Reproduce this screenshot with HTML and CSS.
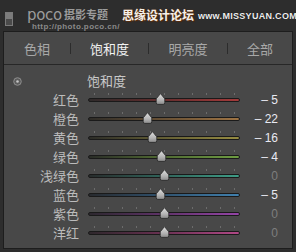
FILE: index.html
```html
<!DOCTYPE html>
<html lang="zh-CN">
<head>
    <meta charset="UTF-8">
    <title>HSL - 饱和度</title>
    <link rel="stylesheet" href="styles.css">
</head>
<body>
    <svg class="defs" width="0" height="0">
        <defs>
            <linearGradient id="knobFill" x1="0" y1="0" x2="0" y2="1">
                <stop offset="0" stop-color="#e0e0e0"/>
                <stop offset="0.6" stop-color="#b4b4b4"/>
                <stop offset="1" stop-color="#8a8a8a"/>
            </linearGradient>
            <symbol id="knob" viewBox="0 0 11 12">
                <path d="M5.5 0.6 L9.8 5.8 V9.6 Q9.8 11.4 8.2 11.4 H2.8 Q1.2 11.4 1.2 9.6 V5.8 Z" fill="url(#knobFill)" stroke="#2a2a2a" stroke-width="0.9"/>
            </symbol>
        </defs>
    </svg>

    <div class="header">
        <span class="toggle"></span>
        <div class="logo">
            <div class="logo-top"><span class="poco">poco</span><span class="zt">摄影专题</span></div>
            <div class="url">http://photo.poco.cn/</div>
        </div>
        <div class="watermark">
            <span class="wm-cn">思缘设计论坛</span>
            <span class="wm-en">www.MISSYUAN.COM</span>
        </div>
    </div>

    <div class="panel">
        <div class="tabs">
            <div class="tab">色相</div>
            <span class="sep"></span>
            <div class="tab active">饱和度</div>
            <span class="sep"></span>
            <div class="tab">明亮度</div>
            <span class="sep"></span>
            <div class="tab">全部</div>
        </div>

        <div class="section">
            <div class="row">
                <div class="cell-icon">
                    <svg width="9" height="9" viewBox="0 0 9 9">
                        <circle cx="4.5" cy="4.5" r="3.8" fill="#5c5c5c" stroke="#8e8e8e" stroke-width="1"/>
                        <circle cx="4.5" cy="4.5" r="1.3" fill="#c4c4c4"/>
                    </svg>
                </div>
                <div class="title">饱和度</div>
            </div>

            <div class="row">
                <div class="label">红色</div>
                <div class="slider">
                    <div class="ticks"><i></i><i></i><i></i><i></i><i></i><i></i><i></i><i></i><i></i><i></i><i></i></div>
                    <div class="track red"></div>
                    <svg class="thumb" style="left: 47.5%"><use href="#knob"/></svg>
                </div>
                <div class="value">– 5</div>
            </div>
            <div class="row">
                <div class="label">橙色</div>
                <div class="slider">
                    <div class="ticks"><i></i><i></i><i></i><i></i><i></i><i></i><i></i><i></i><i></i><i></i><i></i></div>
                    <div class="track orange"></div>
                    <svg class="thumb" style="left: 39%"><use href="#knob"/></svg>
                </div>
                <div class="value">– 22</div>
            </div>
            <div class="row">
                <div class="label">黄色</div>
                <div class="slider">
                    <div class="ticks"><i></i><i></i><i></i><i></i><i></i><i></i><i></i><i></i><i></i><i></i><i></i></div>
                    <div class="track yellow"></div>
                    <svg class="thumb" style="left: 42%"><use href="#knob"/></svg>
                </div>
                <div class="value">– 16</div>
            </div>
            <div class="row">
                <div class="label">绿色</div>
                <div class="slider">
                    <div class="ticks"><i></i><i></i><i></i><i></i><i></i><i></i><i></i><i></i><i></i><i></i><i></i></div>
                    <div class="track green"></div>
                    <svg class="thumb" style="left: 48%"><use href="#knob"/></svg>
                </div>
                <div class="value">– 4</div>
            </div>
            <div class="row">
                <div class="label">浅绿色</div>
                <div class="slider">
                    <div class="ticks"><i></i><i></i><i></i><i></i><i></i><i></i><i></i><i></i><i></i><i></i><i></i></div>
                    <div class="track aqua"></div>
                    <svg class="thumb" style="left: 50%"><use href="#knob"/></svg>
                </div>
                <div class="value zero">0</div>
            </div>
            <div class="row">
                <div class="label">蓝色</div>
                <div class="slider">
                    <div class="ticks"><i></i><i></i><i></i><i></i><i></i><i></i><i></i><i></i><i></i><i></i><i></i></div>
                    <div class="track blue"></div>
                    <svg class="thumb" style="left: 47.5%"><use href="#knob"/></svg>
                </div>
                <div class="value">– 5</div>
            </div>
            <div class="row">
                <div class="label">紫色</div>
                <div class="slider">
                    <div class="ticks"><i></i><i></i><i></i><i></i><i></i><i></i><i></i><i></i><i></i><i></i><i></i></div>
                    <div class="track purple"></div>
                    <svg class="thumb" style="left: 50%"><use href="#knob"/></svg>
                </div>
                <div class="value zero">0</div>
            </div>
            <div class="row">
                <div class="label">洋红</div>
                <div class="slider">
                    <div class="ticks"><i></i><i></i><i></i><i></i><i></i><i></i><i></i><i></i><i></i><i></i><i></i></div>
                    <div class="track magenta"></div>
                    <svg class="thumb" style="left: 50%"><use href="#knob"/></svg>
                </div>
                <div class="value zero">0</div>
            </div>
        </div>
    </div>
</body>
</html>
```

FILE: styles.css
```css
body {
    margin: 0;
    width: 296px;
    height: 252px;
    overflow: hidden;
    background-color: #2d2d2d;
    font-family: "Liberation Sans", "Noto Sans CJK SC", sans-serif;
    color: #c4c4c4;
}

.defs {
    position: absolute;
}

/* header strip */
.header {
    position: relative;
    height: 31px;
    display: flex;
    align-items: flex-start;
}

.toggle {
    margin-left: 5px;
    margin-top: 12px;
    width: 6px;
    height: 12px;
    border: 1px solid #7a7a7a;
    background: linear-gradient(#7c7c7c 50%, #4a4a4a 50%);
}

.logo {
    margin-left: 14px;
    margin-top: 8px;
    display: flex;
    flex-direction: column;
    color: #9c9c9c;
    font-weight: bold;
}

.logo-top {
    display: flex;
    align-items: flex-end;
    height: 13px;
}

.poco {
    font-family: "DejaVu Sans", sans-serif;
    font-size: 15px;
    font-weight: normal;
    letter-spacing: -0.3px;
    line-height: 12px;
}

.zt {
    margin-left: 2px;
    font-size: 11px;
    line-height: 12px;
}

.url {
    margin-left: 5px;
    margin-top: 2px;
    font-size: 8px;
    line-height: 8px;
    letter-spacing: 0.4px;
    color: #8a8a8a;
    white-space: nowrap;
}

.watermark {
    position: absolute;
    left: 122px;
    top: 6px;
    display: flex;
    align-items: center;
    white-space: nowrap;
}

.wm-cn {
    font-size: 12px;
    font-weight: bold;
    color: #f4f0ea;
    text-shadow: 0 0 1px #7a3c10, 1px 1px 1px #5a2a08;
}

.wm-en {
    margin-left: 4px;
    margin-top: 3px;
    font-size: 9px;
    font-weight: bold;
    color: #eee;
    text-shadow: 0 0 1px #000, 1px 1px 0 #333;
    letter-spacing: 0.3px;
}

/* main panel */
.panel {
    margin-left: 3px;
    width: 290px;
    height: 218px;
    box-sizing: border-box;
    border: 1px solid #1d1d1d;
    background-color: #484848;
}

.tabs {
    display: grid;
    grid-template-columns: 66px 1px 77px 1px 78px 1px 1fr;
    height: 32px;
    border-bottom: 1px solid #272727;
}

.tab {
    display: flex;
    align-items: center;
    justify-content: center;
    font-size: 13px;
    color: #a8a8a8;
}

.tab.active {
    color: #f2f2f2;
}

.sep {
    align-self: center;
    height: 11px;
    background-color: #2c2c2c;
}

.section {
    padding-top: 6px;
}

.row {
    display: grid;
    grid-template-columns: 75px 161px 38px;
    height: 19px;
    align-items: center;
}

.row > .slider {
    margin-left: 9px;
}

.cell-icon {
    display: flex;
    padding-left: 9px;
    padding-top: 2px;
}

.title {
    margin-left: 8px;
    font-size: 13px;
    color: #c8c8c8;
}

.label {
    text-align: right;
    font-size: 13px;
    color: #bcbcbc;
}

.slider {
    position: relative;
    height: 19px;
}

.ticks {
    display: flex;
    justify-content: space-between;
    height: 2px;
    margin-top: 3px;
    padding: 0 5px 0 6px;
}

.ticks i {
    width: 1px;
    background-color: #6c6c6c;
}

.track {
    margin-top: 3px;
    height: 2px;
    border: 1px solid #1a1a1a;
    border-radius: 2px;
}

.red { background: linear-gradient(to right, #2e2a2a, #5a2c2c 40%, #a33a3a); }
.orange { background: linear-gradient(to right, #2e2c28, #5e4a32 40%, #9e7444); }
.yellow { background: linear-gradient(to right, #2c2c28, #5a5632 40%, #968c42); }
.green { background: linear-gradient(to right, #2a2c28, #4a6030 40%, #6e9c42); }
.aqua { background: linear-gradient(to right, #282c2c, #2e5a52 40%, #3e9c86); }
.blue { background: linear-gradient(to right, #282a2e, #2e4a62 40%, #4080ae); }
.purple { background: linear-gradient(to right, #2c282e, #56305e 40%, #9444a6); }
.magenta { background: linear-gradient(to right, #2e282c, #5e2e4a 40%, #b04886); }

.thumb {
    position: absolute;
    top: 3px;
    width: 11px;
    height: 12px;
    margin-left: -5px;
}

.value {
    text-align: right;
    font-size: 12px;
    color: #e8eaf2;
}

.value.zero {
    color: #7e7e7e;
}
```
